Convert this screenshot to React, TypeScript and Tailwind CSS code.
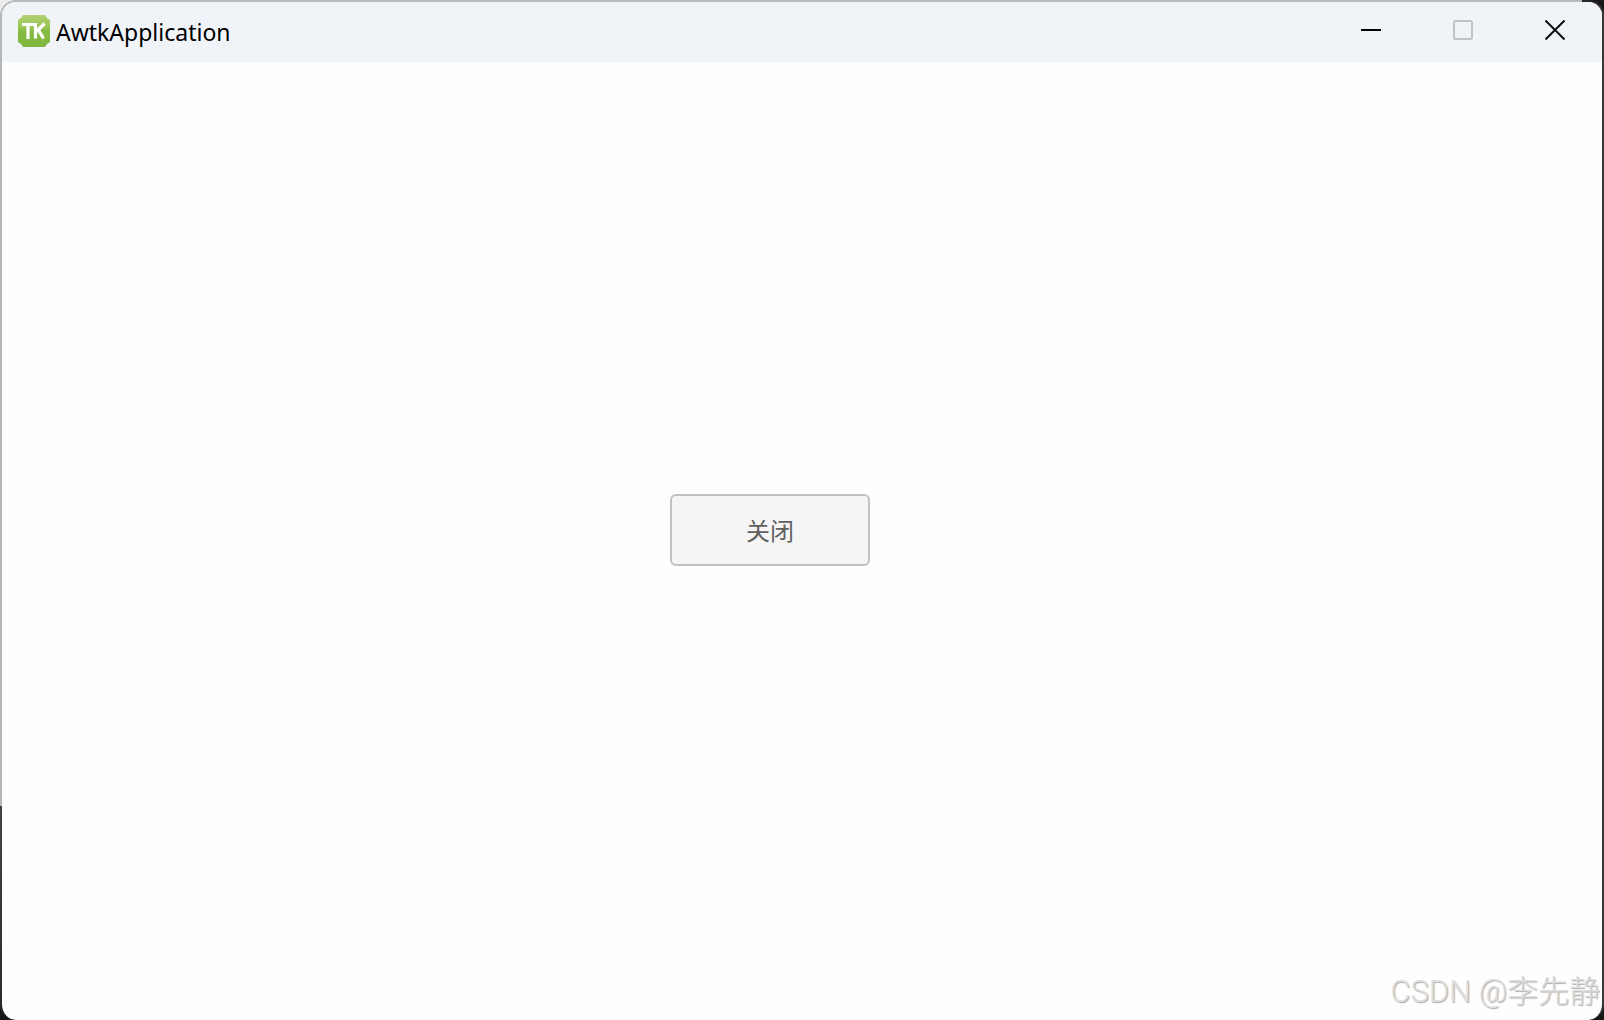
function AppIcon() {
  return (
    <svg viewBox="0 0 32 32" className="h-8 w-8 shrink-0" aria-hidden="true">
      <defs>
        <linearGradient id="leaf" x1="0" y1="0" x2="0" y2="1">
          <stop offset="0" stopColor="#b2d070" />
          <stop offset="0.4" stopColor="#97c454" />
          <stop offset="0.5" stopColor="#86bb3f" />
          <stop offset="1" stopColor="#80b740" />
        </linearGradient>
      </defs>
      <path
        d="M5 0H27Q28.500 3.500 32 5V27Q28.500 28.500 27 32H5Q3.500 28.500 0 27V5Q3.500 3.500 5 0Z"
        fill="url(#leaf)"
      />
      <g fill="none" stroke="#fff" strokeWidth="3.2">
        <path d="M4 9.500H16.500M10 9.500V24" />
        <path d="M17.500 8V23.500M26.500 8.500L18.500 16.500M20.500 15L25.500 23.500" />
      </g>
    </svg>
  );
}

function TitleBar() {
  return (
    <header className="flex h-[60px] shrink-0 items-center bg-[#f0f3f8] pr-px pb-[2px] pl-4">
      <AppIcon />
      <h1 className="ml-[6px] flex-1 pt-[2px] font-['Noto_Sans','Open_Sans',sans-serif] text-[23px] leading-8 text-black">
        AwtkApplication
      </h1>
      <div className="flex h-full pb-[2px]">
        <button type="button" aria-label="Minimize" className="flex w-[92px] items-center justify-center">
          <svg viewBox="0 0 20 20" className="h-5 w-5">
            <path d="M0 10H20" stroke="#000" strokeWidth="2" />
          </svg>
        </button>
        <button type="button" aria-label="Maximize" disabled className="flex w-[92px] items-center justify-center">
          <svg viewBox="0 0 20 20" className="h-5 w-5">
            <rect x="1" y="1" width="18" height="18" rx="1.500" fill="none" stroke="#bfc2c7" strokeWidth="2" />
          </svg>
        </button>
        <button type="button" aria-label="Close" className="flex w-[92px] items-center justify-center">
          <svg viewBox="0 0 20 20" className="h-5 w-5">
            <path d="M0.500 0.500L19.500 19.500M19.500 0.500L0.500 19.500" stroke="#0c0d10" strokeWidth="2" />
          </svg>
        </button>
      </div>
    </header>
  );
}

export default function App() {
  return (
    <div className="flex min-h-screen bg-[linear-gradient(to_bottom,transparent_79%,#171717_79%),linear-gradient(to_right,#ececec_50%,#171717_50%)]">
      {/* the frame is light on the top and left, dark on the right and lower left */}
      <div className="relative flex flex-1 flex-col overflow-hidden rounded-2xl border-2 border-b-0 border-transparent [background:linear-gradient(#fefefe,#fefefe)_padding-box,linear-gradient(to_right,#b9b9b9_calc(100%-22px),#262626_calc(100%-22px))_0_0/100%_2px_no-repeat_border-box,linear-gradient(to_right,transparent_50%,#383838_50%)_border-box,linear-gradient(#b6b6b6_79%,#444_79%,#2a2a2a)_border-box]">
        <TitleBar />
        <main className="flex flex-1 items-center justify-center pr-16 pb-[22px]">
          <button
            type="button"
            className="h-[72px] w-[200px] rounded-md border-2 border-[#c1c1c1] bg-[#f5f5f5] font-['Noto_Sans_CJK_SC',sans-serif] text-[24px] leading-8 text-[#606060]"
          >
            关闭
          </button>
        </main>
        <p className="absolute right-[2px] bottom-2 font-['Roboto','Noto_Sans_CJK_SC',sans-serif] text-[31px] leading-10 font-light text-[#dedede] [text-shadow:1px_1px_1px_#aaa]">
          CSDN @李先静
        </p>
      </div>
    </div>
  );
}
